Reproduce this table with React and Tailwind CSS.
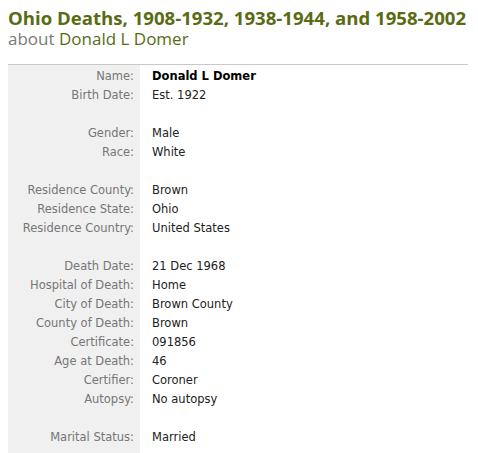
import React from "react";

const rows = [
  ["Name:", "Donald L Domer", true],
  ["Birth Date:", "Est. 1922"],
  null,
  ["Gender:", "Male"],
  ["Race:", "White"],
  null,
  ["Residence County:", "Brown"],
  ["Residence State:", "Ohio"],
  ["Residence Country:", "United States"],
  null,
  ["Death Date:", "21 Dec 1968"],
  ["Hospital of Death:", "Home"],
  ["City of Death:", "Brown County"],
  ["County of Death:", "Brown"],
  ["Certificate:", "091856"],
  ["Age at Death:", "46"],
  ["Certifier:", "Coroner"],
  ["Autopsy:", "No autopsy"],
  null,
  ["Marital Status:", "Married"],
];

const App = () => {
  return (
    <div className="h-[453px] overflow-hidden bg-white pl-2 pr-[10px] pt-[7px]">
      <h1 className="font-['Open_Sans',sans-serif] whitespace-nowrap text-[18.6px] leading-[22px] font-bold text-[#5a6b14]">
        Ohio Deaths, 1908-1932, 1938-1944, and 1958-2002
      </h1>
      <h2 className="font-['Open_Sans',sans-serif] whitespace-nowrap text-[17px] leading-[20px] text-[#5a6b14]">
        <span className="text-[#7a7a7a]">about</span> Donald L Domer
      </h2>

      <div className="mt-[15px] border-t border-[#c8c8c8] grid grid-cols-[132px_1fr] font-['DejaVu_Sans',sans-serif] text-[11.5px]">
        {rows.map((r, i) =>
          r ? (
            <React.Fragment key={i}>
              <div className="bg-[#f0f0f0] h-[19px] leading-[23px] text-right pr-[6px] text-[#767676] whitespace-nowrap">
                {r[0]}
              </div>
              <div
                className={`h-[19px] leading-[23px] pl-3 text-[#222] ${
                  r[2] ? "font-bold text-black" : ""
                }`}
              >
                {r[1]}
              </div>
            </React.Fragment>
          ) : (
            <React.Fragment key={i}>
              <div className="bg-[#f0f0f0] h-[19px]" />
              <div className="h-[19px]" />
            </React.Fragment>
          )
        )}
        <div className="bg-[#f0f0f0] h-[20px]" />
        <div />
      </div>
    </div>
  );
};

export default App;
